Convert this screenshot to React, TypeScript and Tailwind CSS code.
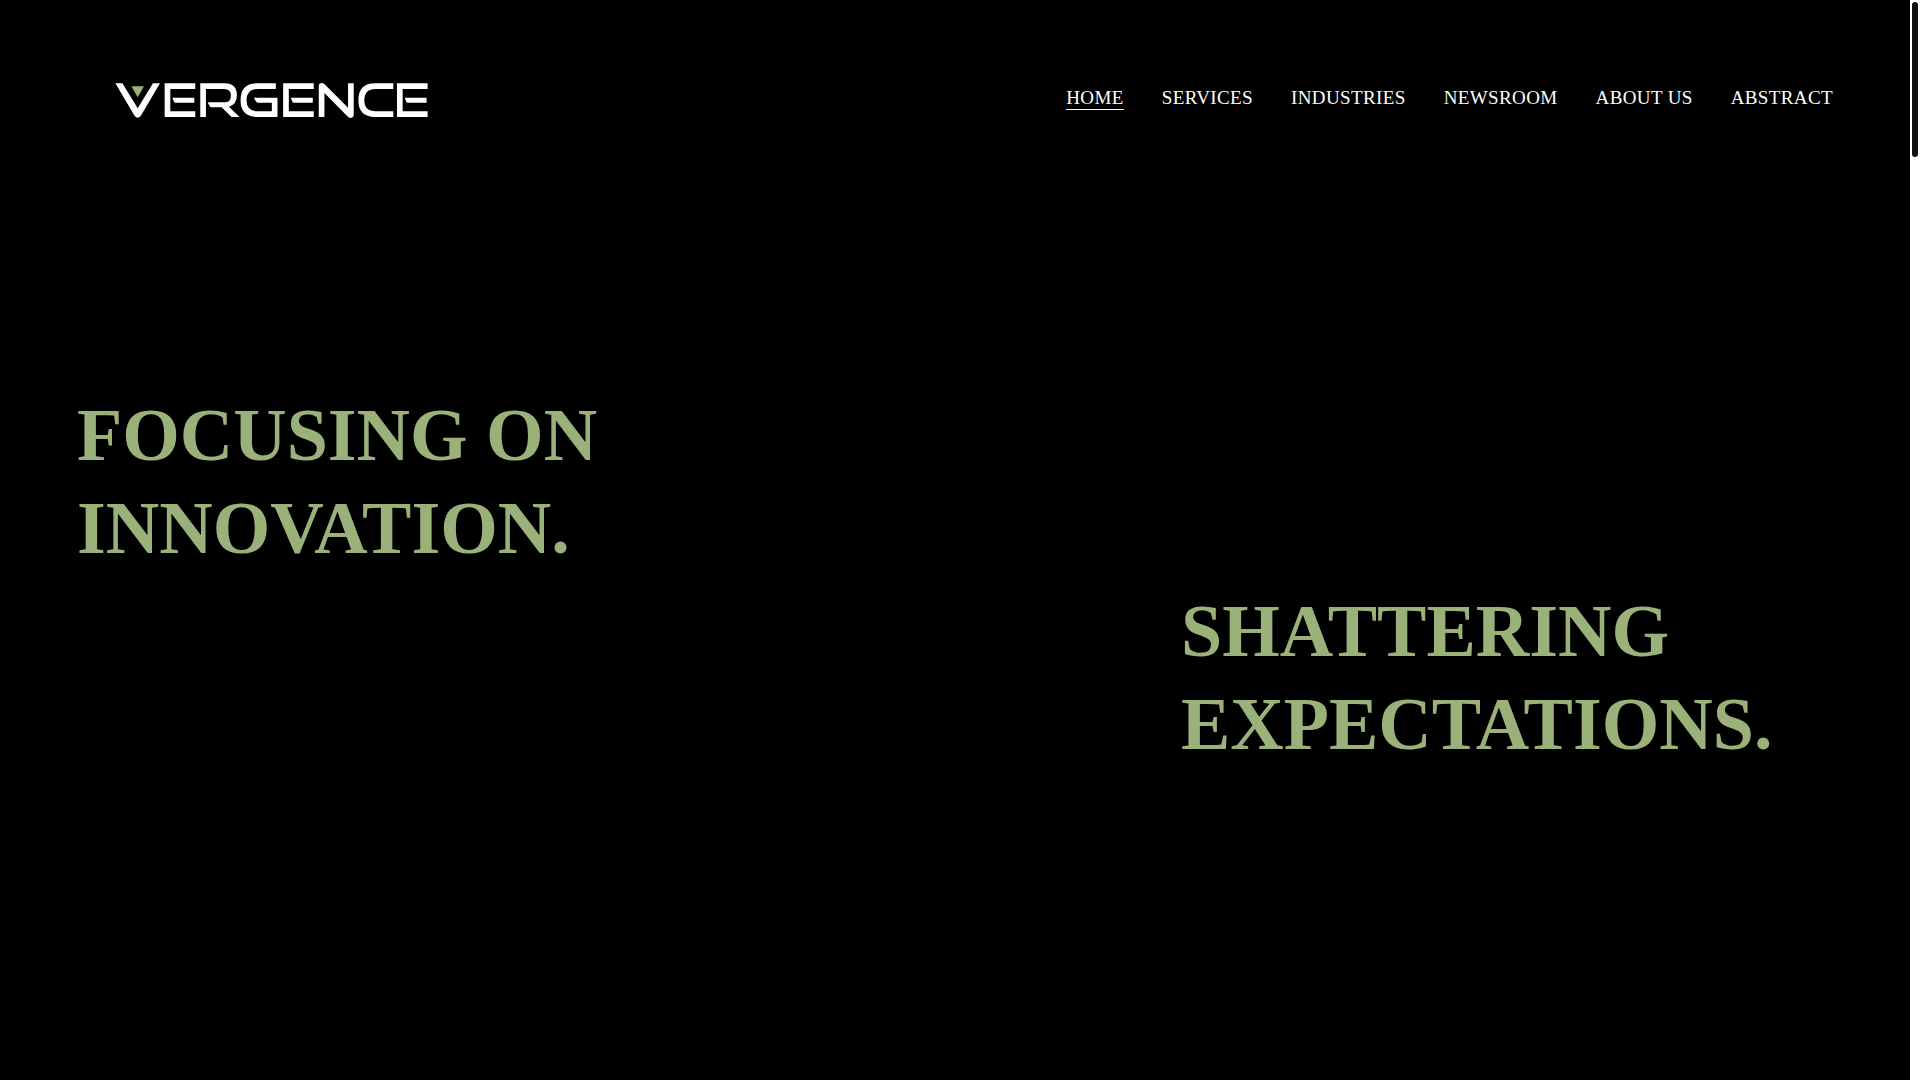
const links = ['Home', 'Services', 'Industries', 'Newsroom', 'About Us', 'Abstract'];

function LetterE({ x }: { x: number }) {
  return (
    <g transform={`translate(${x} 0)`}>
      <path d="M92 40H0V141H92V124H17V57H92Z" />
      <path d="M23 83H89V98H32Q29 98 28 95Z" />
    </g>
  );
}

function Logo() {
  return (
    <svg viewBox="30 39 940 106" className="block w-[313px]" fill="#ffffff" aria-hidden="true">
      <path d="M31 40H52L98 115L144 40H165L107 138Q98 149 89 138Z" />
      <path d="M79 49H117L98 82Z" fill="#9ab27a" />
      <LetterE x={179} />
      <path d="M286 141V40H359Q396 40 396 76Q396 104 372 110L404 141H380L350 112H320Q316 112 314 108L308 97H358Q378 97 378 77Q378 57 358 57H303V141Z" />
      <path d="M513 40H457Q407 40 407 91Q407 141 457 141H518V83H447L453 94Q455 98 460 98H501V124H459Q425 124 425 91Q425 57 459 57H513Z" />
      <LetterE x={535} />
      <path d="M642 141V48Q642 39 651 39Q656 39 661 44L730 113V40H747V134Q747 144 738 144Q733 144 728 139L659 69V141Z" />
      <path d="M866 40H811Q761 40 761 91Q761 141 811 141H866V124H813Q779 124 779 91Q779 57 813 57H866Z" />
      <LetterE x={877} />
    </svg>
  );
}

export default function App() {
  return (
    <div className="flex h-screen bg-black font-['Liberation_Serif',serif]">
      <div className="min-w-0 flex-1">
        <header className="flex items-start justify-between pt-[83px] pr-[77px] pl-[115px]">
          <a href="#" aria-label="Vergence">
            <Logo />
          </a>
          <nav className="flex gap-[38px] pt-1 text-[19px] leading-[22px] tracking-[0.02em] text-white uppercase">
            {links.map((label, i) => (
              <a
                key={label}
                href="#"
                aria-current={i === 0 ? 'page' : undefined}
                className="border-b border-transparent aria-[current=page]:border-white"
              >
                {label}
              </a>
            ))}
          </nav>
        </header>
        <main className="px-[77px] pt-[271px] text-[74px] leading-[93px] font-bold text-[#9ab27a] uppercase">
          <h1>
            Focusing on
            <br />
            innovation.
          </h1>
          <h2 className="mt-[10px] ml-auto w-[652px]">
            Shattering
            <br />
            expectations.
          </h2>
        </main>
      </div>
      <div className="w-[10px] bg-white px-[2px] py-[2px]">
        <div className="h-[155px] rounded-full bg-[#111111]" />
      </div>
    </div>
  );
}
